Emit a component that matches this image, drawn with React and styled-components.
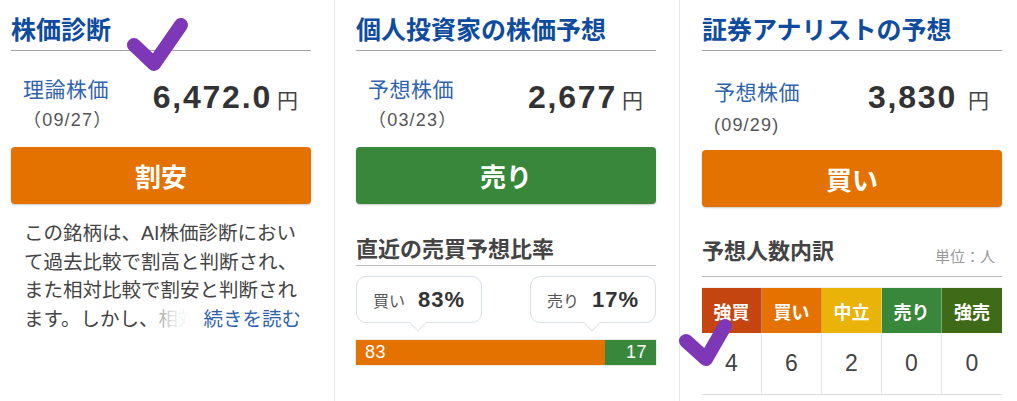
import styled, { createGlobalStyle } from 'styled-components';

const GlobalStyle = createGlobalStyle`
    html, body {
        margin: 0;
        padding: 0;
        background: #fff;
    }
    body {
        font-family: "Liberation Sans", "Noto Sans CJK JP", sans-serif;
    }
`;

const Page = styled.div`
    position: relative;
    display: grid;
    grid-template-columns: 335px 345px 1fr;
    height: 401px;
    overflow: hidden;
`;

const Column = styled.section`
    box-sizing: border-box;
    padding: ${p => p.$pad};
    border-right: ${p => (p.$last ? 'none' : '1px solid #e8e8e8')};
`;

const Title = styled.h2`
    margin: 0;
    padding: 15px 0 5px;
    font-size: 25px;
    line-height: 30px;
    font-weight: 700;
    color: #0f4c9d;
    border-bottom: 1px solid #a3a3a3;
`;

const PriceRow = styled.div`
    display: flex;
    justify-content: space-between;
    align-items: flex-start;
    padding: ${p => (p.$alt ? '27.5px 13px 11px 12px' : '25px 13px 14px 12px')};
`;

const LabelBlock = styled.div`
    display: flex;
    flex-direction: column;
`;

const Label = styled.span`
    font-size: 21px;
    line-height: 28px;
    color: #2f63ae;
    letter-spacing: 0.5px;
`;

const DateText = styled.span`
    margin-top: ${p => (p.$alt ? '4.5px' : '3px')};
    font-size: 18px;
    line-height: ${p => (p.$alt ? '28px' : '26px')};
    letter-spacing: 1.2px;
    color: #555;
`;

const Value = styled.div`
    margin-top: ${p => (p.$alt ? '0.7px' : '3.2px')};
    font-size: 32px;
    line-height: 36px;
    font-weight: 700;
    letter-spacing: 1.8px;
    color: #333;
    white-space: nowrap;
`;

const Yen = styled.span`
    margin-left: ${p => p.$gap || '5px'};
    font-size: 21px;
    font-weight: 400;
    letter-spacing: 0;
    color: #444;
`;

const Verdict = styled.div`
    height: 57px;
    border-radius: 4px;
    background: ${p => p.$color};
    color: #fff;
    font-size: 26px;
    font-weight: 700;
    display: flex;
    align-items: center;
    justify-content: center;
    box-shadow: 0 1px 2px rgba(0, 0, 0, 0.22);
`;

const Desc = styled.div`
    position: relative;
    margin-top: 15px;
    padding: 0 10px 0 13px;
    max-height: 114px;
    overflow: hidden;
    font-size: 19.5px;
    line-height: 28.5px;
    color: #444;
`;

const ReadMore = styled.a`
    position: absolute;
    right: 10px;
    bottom: 0;
    padding-left: 52px;
    background: linear-gradient(to right, rgba(255, 255, 255, 0.35), rgba(255, 255, 255, 0.85) 22px, #fff 40px);
    color: #2f63ae;
    text-decoration: none;
`;

const SubHead = styled.div`
    display: flex;
    justify-content: space-between;
    align-items: flex-end;
    margin-top: ${p => p.$mt || '31px'};
    padding-bottom: ${p => p.$pb || '0'};
    border-bottom: 1px solid #bdbdbd;
`;

const SubTitle = styled.h3`
    margin: 0;
    font-size: 22px;
    line-height: 30px;
    font-weight: 700;
    color: #444;
`;

const Unit = styled.span`
    margin-right: 7px;
    font-size: 15px;
    line-height: 20px;
    color: #999;
`;

const Bubbles = styled.div`
    display: flex;
    justify-content: space-between;
    margin-top: 10px;
`;

const Bubble = styled.div`
    position: relative;
    box-sizing: border-box;
    width: 126px;
    height: 47px;
    border: 1px solid #d8e0ea;
    border-radius: 10px;
    background: #fff;
    display: flex;
    align-items: center;
    justify-content: center;
    gap: 13px;

    &::after {
        content: '';
        position: absolute;
        left: 50%;
        bottom: -7px;
        width: 11px;
        height: 11px;
        margin-left: -7px;
        background: #fff;
        border-right: 1px solid #e6e6e6;
        border-bottom: 1px solid #e6e6e6;
        transform: rotate(45deg);
    }
`;

const BubbleLabel = styled.span`
    font-size: 16px;
    color: #555;
`;

const BubbleValue = styled.span`
    font-size: 22px;
    font-weight: 700;
    color: #333;
    letter-spacing: 1px;
`;

const Bar = styled.div`
    display: flex;
    margin-top: 17px;
    height: 25px;
    box-shadow: 0 0 0 1px #ececec;
`;

const Segment = styled.div`
    box-sizing: border-box;
    padding: 0 9px;
    background: ${p => p.$color};
    color: #fff;
    font-size: 18px;
    line-height: 25px;
    letter-spacing: 0.5px;
    text-align: ${p => p.$align};
`;

const Table = styled.div`
    display: grid;
    grid-template-columns: repeat(5, 1fr);
    margin-top: 10px;
    border-top: 1px solid #eee;
`;

const HeadCell = styled.div`
    height: 45px;
    background: ${p => p.$color};
    border-right: ${p => (p.$last ? 'none' : '1px solid rgba(255, 255, 255, 0.3)')};
    color: #fff;
    font-size: 18px;
    font-weight: 700;
    display: flex;
    align-items: center;
    justify-content: center;
`;

const NumCell = styled.div`
    height: 61px;
    border-bottom: 1px solid #dcdcdc;
    border-right: ${p => (p.$last ? 'none' : '1px solid #e6e6e6')};
    font-size: 23px;
    color: #444;
    display: flex;
    align-items: center;
    justify-content: center;
`;

const Marks = styled.svg`
    position: absolute;
    left: 0;
    top: 0;
    pointer-events: none;
`;

const ORANGE = '#e47200';
const GREEN = '#38873a';

const breakdown = [
    { label: '強買', color: '#c4450f', count: 4 },
    { label: '買い', color: ORANGE, count: 6 },
    { label: '中立', color: '#e9b307', count: 2 },
    { label: '売り', color: GREEN, count: 0 },
    { label: '強売', color: '#3f6a17', count: 0 },
];

const buyRatio = 83;

const App = () => {
    return (
        <>
            <GlobalStyle />
            <Page>
                <Column $pad="0 23px 0 11px">
                    <Title>株価診断</Title>
                    <PriceRow>
                        <LabelBlock>
                            <Label>理論株価</Label>
                            <DateText>（09/27）</DateText>
                        </LabelBlock>
                        <Value>
                            6,472.0<Yen>円</Yen>
                        </Value>
                    </PriceRow>
                    <Verdict $color={ORANGE}>割安</Verdict>
                    <Desc>
                        この銘柄は、AI株価診断において過去比較で割高と判断され、また相対比較で割安と判断されます。しかし、相対比較では割安と判断されたものの、過去比較では割高と判断されています。
                        <ReadMore href="#">続きを読む</ReadMore>
                    </Desc>
                </Column>

                <Column $pad="0 23px 0 21px">
                    <Title>個人投資家の株価予想</Title>
                    <PriceRow>
                        <LabelBlock>
                            <Label>予想株価</Label>
                            <DateText>（03/23）</DateText>
                        </LabelBlock>
                        <Value>
                            2,677<Yen>円</Yen>
                        </Value>
                    </PriceRow>
                    <Verdict $color={GREEN}>売り</Verdict>
                    <SubHead $mt="31px">
                        <SubTitle>直近の売買予想比率</SubTitle>
                    </SubHead>
                    <Bubbles>
                        <Bubble>
                            <BubbleLabel>買い</BubbleLabel>
                            <BubbleValue>{buyRatio}%</BubbleValue>
                        </Bubble>
                        <Bubble>
                            <BubbleLabel>売り</BubbleLabel>
                            <BubbleValue>{100 - buyRatio}%</BubbleValue>
                        </Bubble>
                    </Bubbles>
                    <Bar>
                        <Segment $color={ORANGE} $align="left" style={{ width: `${buyRatio}%` }}>
                            {buyRatio}
                        </Segment>
                        <Segment $color={GREEN} $align="right" style={{ width: `${100 - buyRatio}%` }}>
                            {100 - buyRatio}
                        </Segment>
                    </Bar>
                </Column>

                <Column $pad="0 15px 0 22px" $last>
                    <Title>証券アナリストの予想</Title>
                    <PriceRow $alt>
                        <LabelBlock>
                            <Label>予想株価</Label>
                            <DateText $alt>(09/29)</DateText>
                        </LabelBlock>
                        <Value $alt>
                            3,830<Yen $gap="11px">円</Yen>
                        </Value>
                    </PriceRow>
                    <Verdict $color={ORANGE}>買い</Verdict>
                    <SubHead $mt="30px" $pb="9px">
                        <SubTitle>予想人数内訳</SubTitle>
                        <Unit>単位：人</Unit>
                    </SubHead>
                    <Table>
                        {breakdown.map((b, i) => (
                            <HeadCell key={b.label} $color={b.color} $last={i === breakdown.length - 1}>
                                {b.label}
                            </HeadCell>
                        ))}
                        {breakdown.map((b, i) => (
                            <NumCell key={b.label} $last={i === breakdown.length - 1}>{b.count}</NumCell>
                        ))}
                    </Table>
                </Column>

                <Marks width="1017" height="401" viewBox="0 0 1017 401">
                    <g fill="none" stroke="#7e37b6" strokeWidth="14" strokeLinecap="round" strokeLinejoin="round">
                        <path d="M134 45 L154 64 L181 25" />
                        <path d="M686 341 L706 359 L725 326" />
                    </g>
                </Marks>
            </Page>
        </>
    );
};

export default App;
